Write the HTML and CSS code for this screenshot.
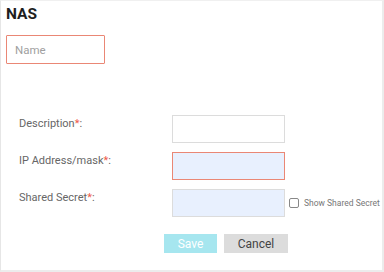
FILE: index.html
```html
<!DOCTYPE html>
<html lang="en">
<head>
  <meta charset="UTF-8" />
  <title>NAS</title>
  <link rel="stylesheet" href="styles.css">
</head>
<body>
  <div class="panel">
    <h1 class="title">NAS</h1>
    <input class="name-input invalid" type="text" placeholder="Name" />

    <!-- form rows -->
    <div class="form">
      <label class="field-label">Description<span class="req">*</span>:</label>
      <input class="field" type="text" />

      <label class="field-label">IP Address/mask<span class="req">*</span>:</label>
      <input class="field filled invalid" type="text" />

      <label class="field-label">Shared Secret<span class="req">*</span>:</label>
      <div class="field-wrap">
        <input class="field filled" type="password" />
        <label class="show-secret"><span class="check"></span>Show Shared Secret</label>
      </div>
    </div>

    <div class="actions">
      <button class="btn btn-save">Save</button>
      <button class="btn btn-cancel">Cancel</button>
    </div>
  </div>
</body>
</html>
```

FILE: styles.css
```css
:root {
  --text: #666;
  --salmon: #ea8775;
  --line: #dcdcdc;
  --fill: #e8f0fe;
}
html, body {
  margin: 0; padding: 0;
  background: #fff;
  font-family: Roboto, 'Liberation Sans', Arial, sans-serif;
}
.panel {
  width: 384px; height: 272px;
  box-sizing: border-box;
  border-left: 1px solid #e6e6e6;
  border-top: 1px solid #f0f0f0;
  border-right: 2px solid #ececec;
  border-bottom: 2px solid #ececec;
  padding: 3px 0 0 5px;
}
.title {
  margin: 0;
  font-size: 15.5px;
  line-height: 20px;
  font-weight: 700;
  color: #1e1e1e;
}
.name-input {
  display: block;
  margin-top: 11px;
  width: 99px; height: 29px;
  box-sizing: border-box;
  border: 1px solid var(--line);
  border-radius: 1px;
  padding: 0 8px;
  font-family: inherit;
  font-size: 11.5px;
  outline: none;
}
.name-input::placeholder { color: #a0a0a0; }
.invalid { border-color: var(--salmon) !important; }
.form {
  display: grid;
  grid-template-columns: 153px auto;
  row-gap: 9px;
  margin: 51px 0 0 13px;
  align-items: start;
}
.field-label {
  font-size: 11px;
  color: var(--text);
  padding-top: 2px;
  line-height: 14px;
}
.req { color: #ef5a4a; }
.field {
  display: block;
  width: 113px; height: 28px;
  box-sizing: border-box;
  border: 1px solid var(--line);
  background: #fff;
  margin: 0;
  outline: none;
}
.field.filled { background: var(--fill); }
.field-wrap {
  display: flex;
  align-items: center;
  gap: 4px;
}
.show-secret {
  display: flex;
  align-items: center;
  gap: 5px;
  font-size: 8.5px;
  color: #777;
  white-space: nowrap;
}
.check {
  width: 10px; height: 10px;
  box-sizing: border-box;
  border: 1px solid #888;
  border-radius: 2px;
}
.actions {
  display: flex;
  gap: 7px;
  margin: 17px 0 0 158px;
}
.btn {
  height: 19px;
  border: none;
  margin: 0;
  padding: 0;
  font-family: inherit;
  font-size: 12px;
  cursor: pointer;
}
.btn-save {
  width: 53px;
  background: #a6e6ef;
  color: #fff;
}
.btn-cancel {
  width: 64px;
  background: #dcdcdc;
  color: #444;
}
```
